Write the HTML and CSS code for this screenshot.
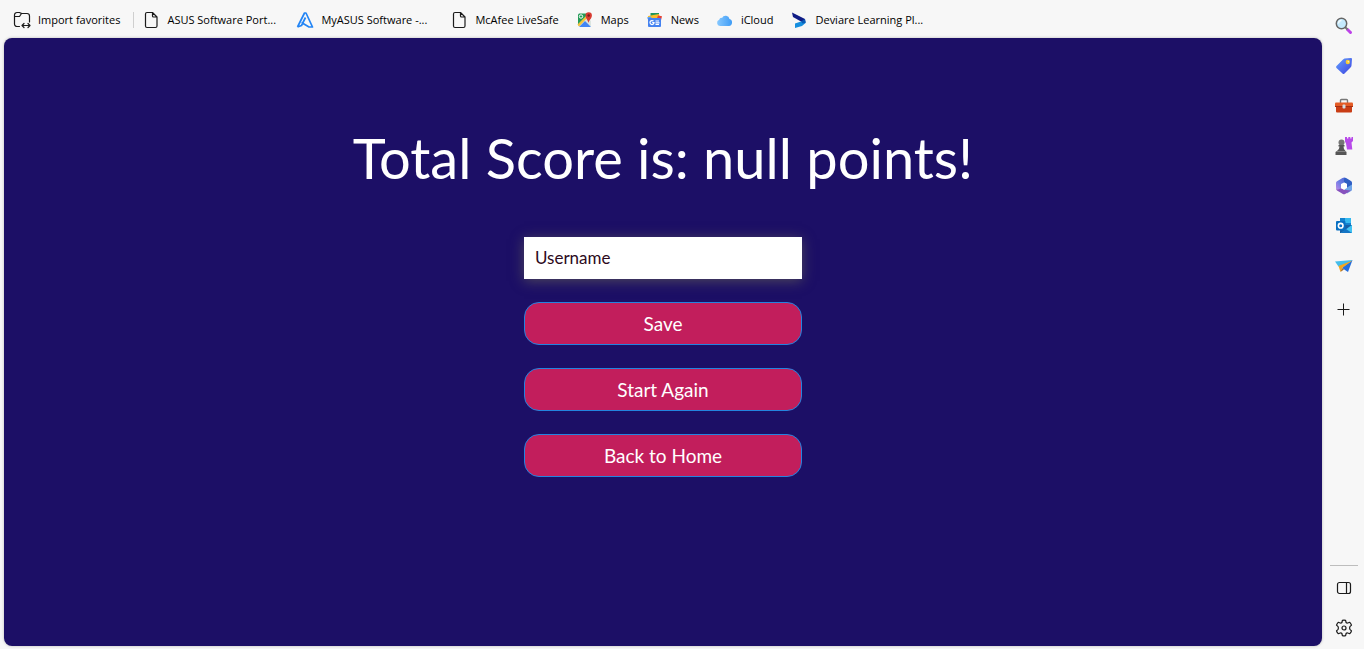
FILE: index.html
```
<!DOCTYPE html>
<html lang="en">
<head>
<meta charset="utf-8">
<title>Total Score</title>
<link rel="stylesheet" href="styles.css">
</head>
<body>
<div class="browser">
  <div class="main">
    <nav class="bookmarks" aria-label="Favorites">
      <button class="bookmark" type="button">
        <svg class="icon" viewBox="0 0 18 18" fill="none" stroke="#1b1b1b" stroke-width="1.2" stroke-linecap="round" stroke-linejoin="round"><path d="M6.500 15.500H4A2.500 2.500 0 0 1 1.500 13V4A2.500 2.500 0 0 1 4 1.500h2.500l2 1H14A2.500 2.500 0 0 1 16.500 5v6M1.500 5.500h5l2-3M9 14.500h8M11 12.500l-2 2 2 2M15 12.500l2 2-2 2"/></svg>
        <span>Import favorites</span>
      </button>
      <span class="divider"></span>
      <a class="bookmark" href="#">
        <svg class="icon" viewBox="0 0 18 18" fill="none" stroke="#1b1b1b" stroke-width="1.2" stroke-linejoin="round"><path d="M5 1.500h5.500l4.500 4.500v9A1.500 1.500 0 0 1 13.500 16.500H5A1.500 1.500 0 0 1 3.500 15V3A1.500 1.500 0 0 1 5 1.500zM10.500 1.500V5a1 1 0 0 0 1 1H15"/></svg>
        <span class="clipped">ASUS Software Port...</span>
      </a>
      <a class="bookmark" href="#">
        <svg class="icon" viewBox="0 0 18 18"><path fill="none" stroke="#2385f5" stroke-width="1.700" stroke-linejoin="round" d="M1.500 16L8.500 2h1.500L16.500 16h-3.500L5.500 11.500M1.500 16l4-1.500 4-8"/></svg>
        <span class="clipped">MyASUS Software -...</span>
      </a>
      <a class="bookmark" href="#">
        <svg class="icon" viewBox="0 0 18 18" fill="none" stroke="#1b1b1b" stroke-width="1.2" stroke-linejoin="round"><path d="M5 1.500h5.500l4.500 4.500v9A1.500 1.500 0 0 1 13.500 16.500H5A1.500 1.500 0 0 1 3.500 15V3A1.500 1.500 0 0 1 5 1.500zM10.500 1.500V5a1 1 0 0 0 1 1H15"/></svg>
        <span>McAfee LiveSafe</span>
      </a>
      <a class="bookmark" href="#">
        <svg class="icon" viewBox="0 0 18 18"><path fill="#249b57" d="M3 2.500h10v12H2v-11z"/><path fill="#dbe5e0" d="M2 15L11 6l4 4v5z"/><path fill="#4285f4" d="M3 16l6-6 6 6z"/><path fill="#f3c33b" d="M1.500 13.500L12 3l1 2L3 15.500z"/><circle cx="5" cy="5.500" r="1.700" fill="none" stroke="#fff"/><path fill="#d83b32" d="M12.500 12C12 9 9.500 7.500 9.500 4.500a3.200 3.200 0 0 1 6.400 0c0 3-2.900 4.500-3.400 7.500z"/><circle cx="12.700" cy="4.500" r="1.200" fill="#7b1f18"/></svg>
        <span>Maps</span>
      </a>
      <a class="bookmark" href="#">
        <svg class="icon" viewBox="0 0 18 18"><path fill="#21975a" d="M4.500 2h8.500v5H4.500z"/><path fill="#fbbc2a" d="M2 5l11-2 1 4H2z"/><path fill="#e54235" d="M12 4.500l4 .8-1 4-4-2z"/><path fill="#5ba2f7" d="M1 6.500l4-1 1 3H2z"/><rect x="2" y="7" width="13" height="9" rx="1" fill="#4482f0"/><path fill="none" stroke="#fff" stroke-width="1.200" d="M7.500 10.200A2 2 0 1 0 8 11.700H6.200M9.500 10h3.500M9.500 11.800h4M9.500 13.500h3.500"/></svg>
        <span>News</span>
      </a>
      <a class="bookmark" href="#">
        <svg class="icon" viewBox="0 0 18 18"><defs><linearGradient id="cloud" x2="1"><stop stop-color="#86c8ff"/><stop offset="1" stop-color="#3f9cf6"/></linearGradient></defs><path fill="url(#cloud)" d="M4 15a3.200 3.200 0 0 1-.8-6.200A2.500 2.500 0 0 1 6 6.900 4 4 0 0 1 13.500 8 3.600 3.600 0 0 1 13 15z"/></svg>
        <span>iCloud</span>
      </a>
      <a class="bookmark" href="#">
        <svg class="icon" viewBox="0 0 18 18"><path fill="#101d86" d="M2 1.500L15 8l.5 3.500L11 10.500 3 6z"/><path fill="#168fdf" d="M15.500 10.500v1.500L12 15l-7 2v-4.500l6-2z"/><path fill="#0a5bb7" d="M11 10.500l4-2.500.5 4-3 .5z"/></svg>
        <span class="clipped">Deviare Learning Pl...</span>
      </a>
    </nav>
    <main class="page">
      <form class="score">
        <h1 class="title">Total Score is: null points!</h1>
        <input class="field" type="text" placeholder="Username" aria-label="Username">
        <button class="btn" type="button">Save</button>
        <button class="btn" type="button">Start Again</button>
        <button class="btn" type="button">Back to Home</button>
      </form>
    </main>
  </div>
  <aside class="sidebar">
    <button class="tool" type="button" aria-label="Search">
      <svg class="icon" viewBox="0 0 18 18"><path stroke="#bd42e8" stroke-width="3" stroke-linecap="round" d="M12.500 12.500l3 3"/><path stroke="#777" stroke-width="2" d="M10 10l2.500 2.500"/><circle cx="6.500" cy="6.500" r="5.200" fill="#c5eafd" stroke="#666" stroke-width="1.500"/><path fill="none" stroke="#f3fcff" stroke-width="1.300" d="M3.500 6.500a3 3 0 0 1 3-3"/></svg>
    </button>
    <button class="tool" type="button" aria-label="Shopping">
      <svg class="icon" viewBox="0 0 18 18"><defs><linearGradient id="tag" x2="1" y2="1"><stop stop-color="#63a2ff"/><stop offset="1" stop-color="#3e43df"/></linearGradient></defs><path fill="url(#tag)" d="M9.500 1.500L16 1q1 0 1 1l-.5 6.500q0 1-1 2L9.500 16.500q-1 1-2 0L1.500 11q-1-1 0-2L8 2.500z"/><circle cx="12.800" cy="5" r="2.200" fill="#f8ca30"/><circle cx="13.300" cy="4.700" r=".8" fill="#fff2b5"/></svg>
    </button>
    <button class="tool" type="button" aria-label="Tools">
      <svg class="icon" viewBox="0 0 18 18"><path fill="none" stroke="#777" stroke-width="1.400" d="M5.500 6V3.500q0-1 1-1h5q1 0 1 1V6"/><path fill="#c93d15" d="M1 9h16v5.500q0 1-1 1H2q-1 0-1-1z"/><path fill="#e45c26" d="M1 5.500h16q1 0 1 1V10H0V6.500q0-1 1-1z"/><path fill="#a52f13" d="M0 9h18v1H0z"/><rect x="7.500" y="7.500" width="3" height="4" rx="1" fill="#d4dce1"/></svg>
    </button>
    <button class="tool" type="button" aria-label="Games">
      <svg class="icon" viewBox="0 0 18 18"><path fill="#b84be9" d="M10 0h2v1.500h1.300V0h2v1.500h1.200V0H18v4l-1.500 1.500.8 7H12l-1-6-1-2z"/><circle cx="6.500" cy="5.500" r="3" fill="#757575"/><path fill="#565656" d="M3.500 8h6v1.500H8.500q0 3 2 4.500l1 1v3H.5v-3l1.500-1q2.500-1.500 2.500-4.500h-1z"/><path stroke="#858585" d="M2 14.500h9"/></svg>
    </button>
    <button class="tool" type="button" aria-label="Microsoft 365">
      <svg class="icon" viewBox="0 0 18 18"><defs><linearGradient id="office" x1="1" x2="0" y2="1"><stop stop-color="#4d63d2"/><stop offset=".5" stop-color="#6b7de4"/><stop offset="1" stop-color="#c58bea"/></linearGradient></defs><path fill="url(#office)" d="M7.500 1q2-1 4 .2L9 3.500v3L6 8.500v3L5 14l-3-1.500q-1-.6-1-2V6q0-1 1-1.700z"/><path fill="#2f5fc4" d="M9 1.500q1-1 2.500-.2L16 4q1 .6 1 1.800v6q0 1-1 1.500l-4-2.300V7L9 5.500z"/><path fill="#6ea5e8" d="M12 10.500l5-3v5q0 1-1 1.600L12 16.500 9.500 12z"/><path fill="#8752bd" d="M1.200 11q.3 1.500 1.800 1.500.8 0 3-1.200l3 1.500 7 .6-5.500 3.400q-1.500 1-3 0l-5.500-3.300q-1-.7-.8-2.500z"/><path fill="#fff" d="M9 5.500L12 7v4L9 12.500 6 11V7z"/></svg>
    </button>
    <button class="tool" type="button" aria-label="Outlook">
      <svg class="icon" viewBox="0 0 18 18"><path fill="#1282cf" d="M5 1h11v9H5z"/><path fill="#35b9ef" d="M10 1h6v5h-6z"/><path fill="#165fa6" d="M5 8h12v8H5z"/><path fill="#41c3f2" d="M17 8v8H6l8-6z"/><path fill="#1575c5" d="M11 12l6 4H6z"/><rect x="1" y="4" width="9.500" height="9.500" rx="1" fill="#0870c3"/><circle cx="5.700" cy="8.700" r="2.300" fill="none" stroke="#fff" stroke-width="1.600"/></svg>
    </button>
    <button class="tool" type="button" aria-label="Drop">
      <svg class="icon" viewBox="0 0 18 18"><path fill="#45bdea" d="M0 4.500L17.500 3 9 10 3.500 9.500z"/><path fill="#246ddd" d="M17.500 3l-4.500 12L7 11z"/><path fill="#f5a51d" d="M3.500 9L17.500 3.500 7 11l-1.500 4z"/><path fill="#a66d2b" d="M7 11l2 1.500L5.500 15z"/></svg>
    </button>
    <button class="tool add" type="button" aria-label="Add">
      <svg class="icon" viewBox="0 0 18 18" stroke="#1b1b1b" stroke-width="1"><path d="M8.500 2.500v12M2.500 8.500h12"/></svg>
    </button>
    <div class="sidebar-end">
      <button class="tool" type="button" aria-label="Hide sidebar">
        <svg class="icon" viewBox="0 0 18 18" fill="none" stroke="#1b1b1b" stroke-width="1.200"><rect x="2.500" y="3.500" width="13" height="11" rx="2"/><path d="M11.500 3.500v11"/></svg>
      </button>
      <button class="tool" type="button" aria-label="Settings">
        <svg class="icon" viewBox="0 0 18 18" fill="none" stroke="#1b1b1b" stroke-width="1.200" stroke-linejoin="round"><path d="M7.400 1.300Q9 .9 10.600 1.300L11.100 3.500Q11.700 4.200 12.700 4L14.800 3.300Q16 4.500 16.500 6.100L14.900 7.700Q14.300 9 14.900 10.300L16.500 11.900Q16 13.500 14.800 14.700L12.700 14Q11.700 13.800 11.100 14.500L10.600 16.700Q9 17.100 7.400 16.700L6.900 14.500Q6.300 13.800 5.300 14L3.200 14.700Q2 13.500 1.500 11.900L3.100 10.300Q3.700 9 3.100 7.700L1.500 6.100Q2 4.500 3.200 3.300L5.300 4Q6.300 4.200 6.900 3.500z"/><circle cx="9" cy="9" r="2"/></svg>
      </button>
    </div>
  </aside>
</div>
</body>
</html>
```
FILE: styles.css
```
* { box-sizing: border-box; }
body { margin: 0; background: #f7f7f7; font-family: "Segoe UI", "Open Sans", sans-serif; }
button { border: 0; background: none; padding: 0; font: inherit; color: inherit; cursor: pointer; }
.browser { display: flex; min-height: 100vh; }
.main { flex: 1; display: flex; flex-direction: column; padding: 0 0 3px 4px; min-width: 0; }
.bookmarks { display: flex; align-items: center; height: 38px; padding: 2px 0 0 9px; gap: 17px; }
.bookmark { display: flex; align-items: center; gap: 7px; font-size: 11px; line-height: 16px; color: #000; text-decoration: none; white-space: nowrap; }
.clipped { width: 112px; overflow: hidden; text-overflow: ellipsis; }
.icon { display: block; flex: none; width: 18px; height: 18px; }
.divider { width: 1px; height: 16px; margin: 0 -9px 0 -4px; background: #cfcfcf; }
.page { flex: 1; padding-top: 86px; border-radius: 8px; background: #1c0f66; box-shadow: 0 0 3px rgba(0, 0, 0, 0.25); font-family: Lato, sans-serif; }
.score { display: flex; flex-direction: column; align-items: center; gap: 23px; }
.title { margin: 0 0 22px; font-size: 56px; line-height: 68px; font-weight: 400; color: #fff; text-align: center; }
.field, .btn { width: 278px; max-width: 90%; height: 43px; }
.field { height: 42px; padding: 0 11px 2px; border: 0; background: #fff; font: 17px/24px Lato, sans-serif; color: #2d0a1c; box-shadow: 0 2px 12px rgba(130, 130, 80, 0.5); }
.field::placeholder { color: #2d0a1c; opacity: 1; }
.btn { border: 1px solid #2384df; border-radius: 15px; background: #c21e5c; color: #fff; font-size: 19px; line-height: 24px; }
.sidebar { display: flex; flex-direction: column; align-items: center; width: 42px; padding: 6px 0 1px 2px; }
.tool { display: grid; place-items: center; flex: none; width: 40px; height: 40px; }
.add { margin-top: 4px; }
.sidebar-end { margin-top: auto; border-top: 1px solid #bdbdbd; width: 28px; display: flex; flex-direction: column; align-items: center; padding-top: 2px; }
```
